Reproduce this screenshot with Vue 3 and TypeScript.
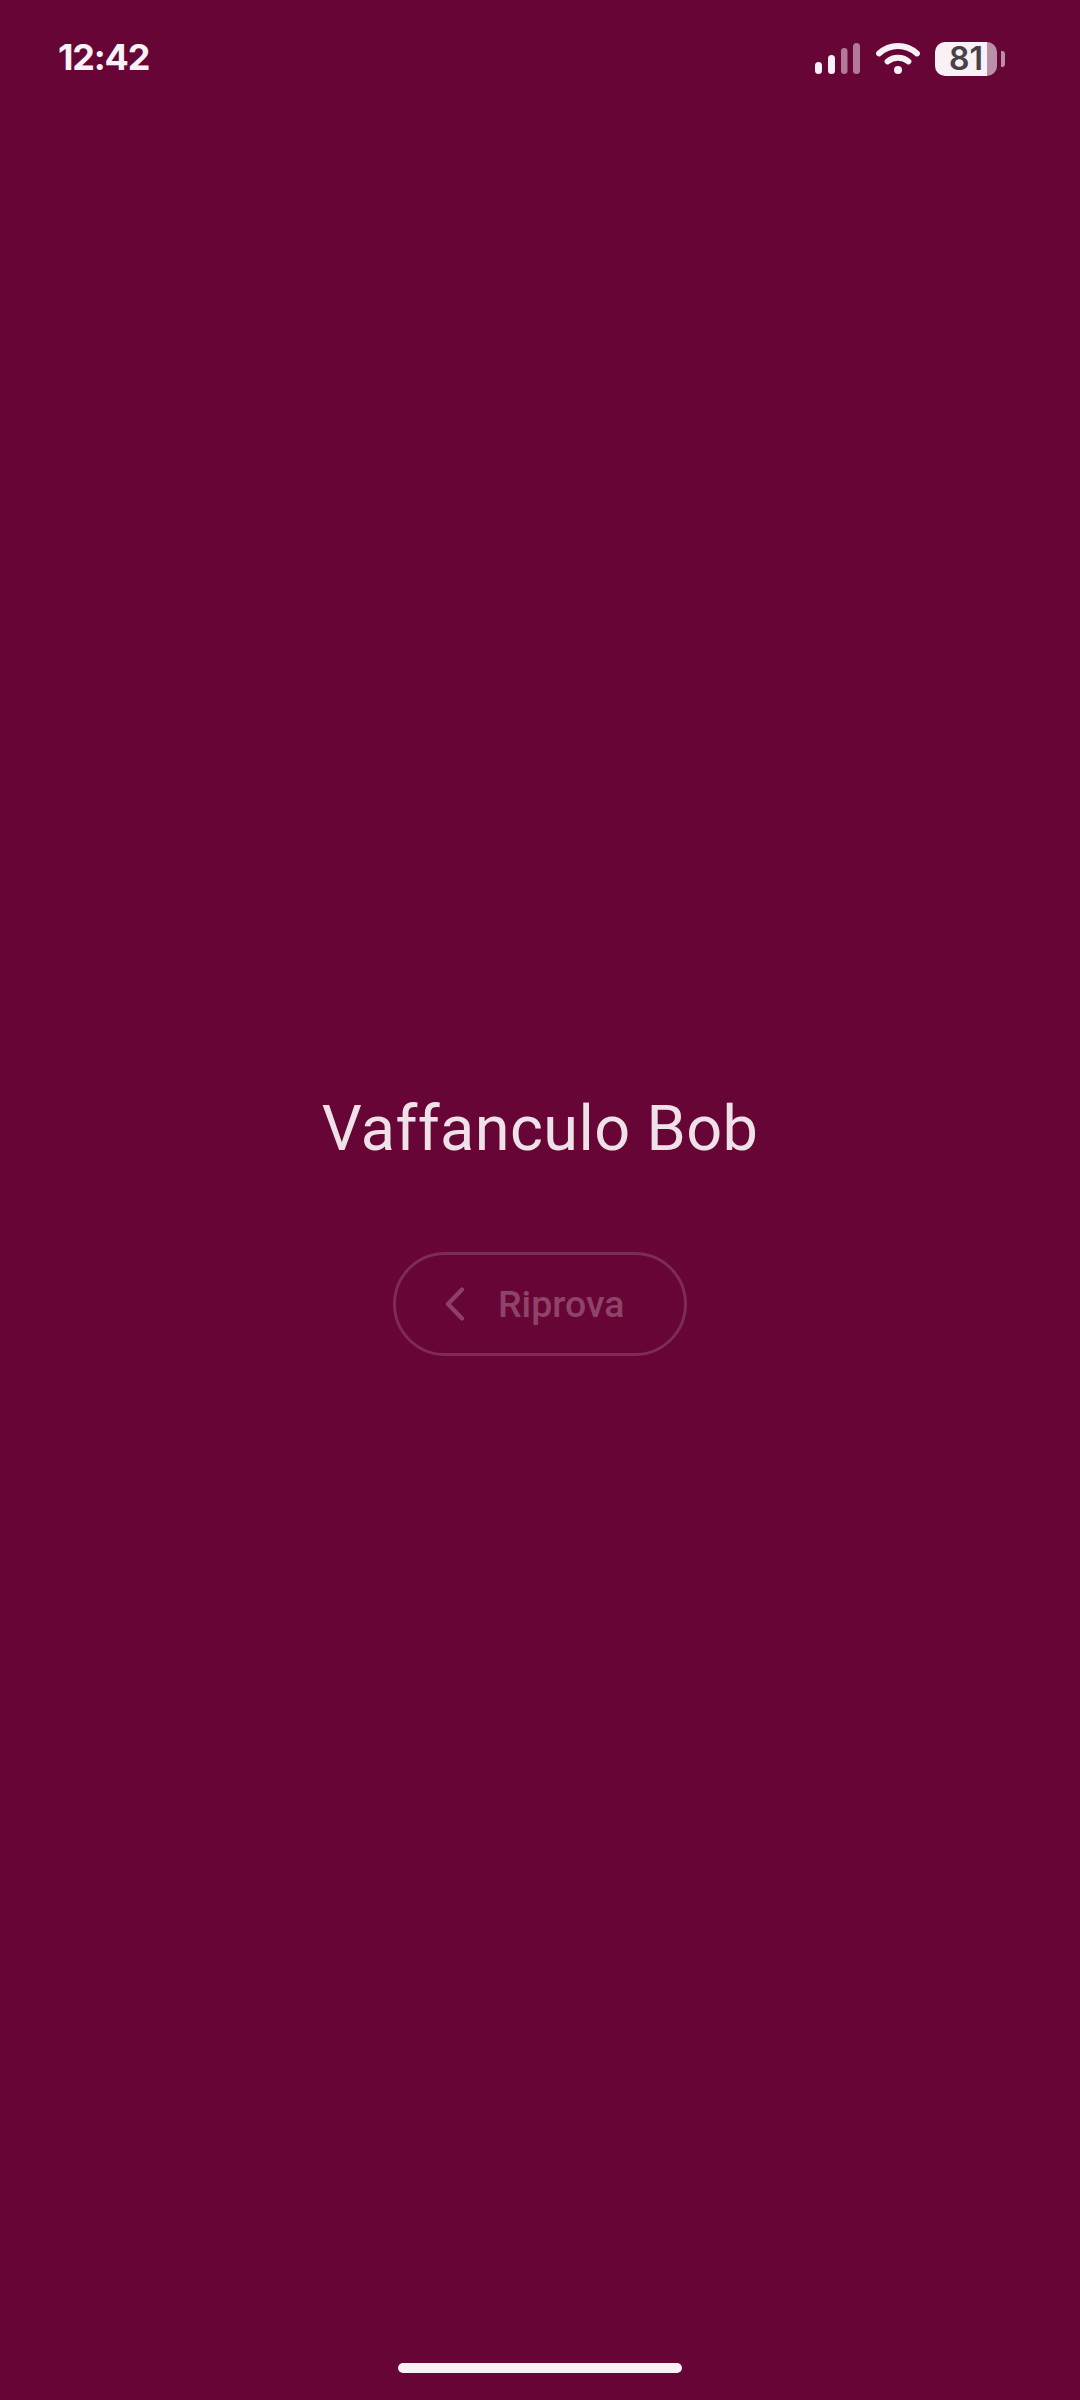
<script setup lang="ts">
const title: string = 'Vaffanculo Bob'
const action: string = 'Riprova'
</script>

<template>
  <div class="page">
    <header class="status">
      <span class="time">12:42</span>
      <div class="indicators">
        <svg class="signal" width="45" height="31" viewBox="0 0 45 31">
          <rect x="0" y="19" width="7" height="12" rx="3.5" fill="#f8f1f5" />
          <rect x="13" y="12" width="7" height="19" rx="3.5" fill="#f8f1f5" />
          <rect x="26" y="5" width="6.5" height="26" rx="3.2" fill="#b27a98" />
          <rect x="38" y="0" width="7" height="31" rx="3.5" fill="#b27a98" />
        </svg>
        <svg class="wifi" width="44" height="32" viewBox="0 0 44 32" fill="none">
          <path d="M3 11.5C14 1.5 30 1.5 41 11.5" stroke="#f8f1f5" stroke-width="5.8" stroke-linecap="round" />
          <path d="M11.5 19.5C17.5 14.5 26.5 14.5 32.5 19.5" stroke="#f8f1f5" stroke-width="5.8" stroke-linecap="round" />
          <circle cx="22" cy="28" r="4" fill="#f8f1f5" />
        </svg>
        <div class="battery-wrap">
          <div class="battery">81</div>
          <span class="nub"></span>
        </div>
      </div>
    </header>

    <main class="content">
      <h1 class="title">{{ title }}</h1>
      <button class="retry" type="button">
        <svg class="chevron" width="20" height="34" viewBox="0 0 20 34" fill="none">
          <path d="M17 2.5L3 17L17 31.5" stroke="#8d3f68" stroke-width="4.4" stroke-linecap="round" stroke-linejoin="round" />
        </svg>
        <span>{{ action }}</span>
      </button>
    </main>

    <footer class="home">
      <span class="home-bar"></span>
    </footer>
  </div>
</template>

<style scoped>
.page {
  width: 1080px;
  height: 2400px;
  background: #660536;
  display: flex;
  flex-direction: column;
  overflow: hidden;
}

.status {
  height: 88px;
  flex: none;
  display: flex;
  align-items: flex-start;
  justify-content: space-between;
  padding: 36px 75px 0 58px;
  box-sizing: border-box;
}

.time {
  font-family: Inter, "Liberation Sans", sans-serif;
  font-size: 36px;
  line-height: 42px;
  font-weight: 700;
  letter-spacing: -1.2px;
  color: #f8f1f5;
}

.indicators {
  display: flex;
  align-items: flex-start;
  margin-top: 6px;
}

.signal {
  margin-top: 1px;
}

.wifi {
  margin-left: 16px;
  margin-top: 0;
}

.battery-wrap {
  display: flex;
  align-items: center;
  margin-left: 15px;
}

.battery {
  width: 62px;
  height: 34px;
  border-radius: 10px;
  background: linear-gradient(to right, #f8f1f5 84%, #bb8fa8 84%);
  color: #4a4048;
  font-family: Inter, "Liberation Sans", sans-serif;
  font-size: 32px;
  font-weight: 600;
  line-height: 34px;
  text-align: center;
}

.nub {
  width: 4px;
  height: 16px;
  margin-left: 4px;
  border-radius: 0 3px 3px 0;
  background: #bb8fa8;
}

.content {
  flex: 1;
  display: flex;
  flex-direction: column;
  align-items: center;
  padding-top: 1003px;
}

.title {
  margin: 0;
  font-family: Roboto, "Liberation Sans", sans-serif;
  font-size: 63px;
  line-height: 76px;
  font-weight: 400;
  letter-spacing: 0.4px;
  color: #efe1e8;
  white-space: nowrap;
}

.retry {
  margin-top: 85px;
  width: 294px;
  height: 104px;
  box-sizing: border-box;
  border: 3px solid #7d2c57;
  border-radius: 52px;
  background: transparent;
  display: flex;
  align-items: center;
  padding: 0 0 0 49px;
  gap: 33px;
  font-family: Roboto, "Liberation Sans", sans-serif;
  font-size: 37.5px;
  font-weight: 500;
  color: #904369;
}

.chevron {
  flex: none;
}

.home {
  flex: none;
  height: 37px;
  display: flex;
  justify-content: center;
}

.home-bar {
  width: 284px;
  height: 10px;
  border-radius: 5px;
  background: #f8f1f5;
}
</style>
